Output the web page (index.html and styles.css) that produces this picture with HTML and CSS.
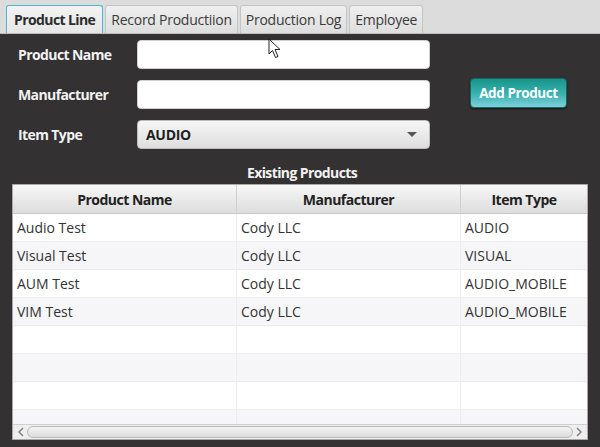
FILE: index.html
```html
<!DOCTYPE html>
<html>
<head>
<meta charset="utf-8">
<link rel="stylesheet" href="styles.css">
</head>
<body>
<div class="app">
  <div class="tabbar">
    <div class="tab active">Product Line</div>
    <div class="tab">Record Productiion</div>
    <div class="tab">Production Log</div>
    <div class="tab">Employee</div>
  </div>
  <div class="content">
    <div class="form">
      <div class="fields">
        <label class="lbl">Product Name</label>
        <div class="input"></div>
        <label class="lbl">Manufacturer</label>
        <div class="input"></div>
        <label class="lbl">Item Type</label>
        <div class="combo"><span>AUDIO</span><span class="caret"></span></div>
      </div>
      <div class="side">
        <button class="btn">Add Product</button>
      </div>
    </div>
    <div class="caption">Existing Products</div>
    <div class="table">
      <div class="thead">
        <div class="th c1">Product Name</div>
        <div class="th c2">Manufacturer</div>
        <div class="th c3">Item Type</div>
      </div>
      <div class="tbody">
        <div class="tr"><div class="td c1">Audio Test</div><div class="td c2">Cody LLC</div><div class="td c3">AUDIO</div></div>
        <div class="tr"><div class="td c1">Visual Test</div><div class="td c2">Cody LLC</div><div class="td c3">VISUAL</div></div>
        <div class="tr"><div class="td c1">AUM Test</div><div class="td c2">Cody LLC</div><div class="td c3">AUDIO_MOBILE</div></div>
        <div class="tr"><div class="td c1">VIM Test</div><div class="td c2">Cody LLC</div><div class="td c3">AUDIO_MOBILE</div></div>
        <div class="tr"><div class="td c1"></div><div class="td c2"></div><div class="td c3"></div></div>
        <div class="tr"><div class="td c1"></div><div class="td c2"></div><div class="td c3"></div></div>
        <div class="tr"><div class="td c1"></div><div class="td c2"></div><div class="td c3"></div></div>
        <div class="tr short"><div class="td c1"></div><div class="td c2"></div><div class="td c3"></div></div>
      </div>
      <div class="hscroll">
        <svg class="arrow" width="12" height="12" viewBox="0 0 12 12"><path d="M8 2 L4 6 L8 10" fill="none" stroke="#777" stroke-width="1.3"/></svg>
        <div class="track"></div>
        <svg class="arrow" width="12" height="12" viewBox="0 0 12 12"><path d="M4 2 L8 6 L4 10" fill="none" stroke="#777" stroke-width="1.3"/></svg>
      </div>
    </div>
  </div>
  <svg class="cursor" width="14" height="22" viewBox="0 0 14 22">
    <path d="M1 1 L1 16 L4.5 12.5 L7.5 19.5 L10 18.5 L7 11.5 L12 11.5 Z" fill="#fff" stroke="#222" stroke-width="1"/>
  </svg>
</div>
</body>
</html>
```
FILE: styles.css
```css
* { box-sizing: border-box; }
html, body { margin: 0; padding: 0; }
body {
  width: 600px;
  height: 447px;
  overflow: hidden;
  background: #333132;
  font-family: "Open Sans", "Noto Sans", sans-serif;
  font-size: 14px;
}
.app { position: relative; width: 600px; height: 447px; }
.tabbar {
  height: 34px;
  background: #dcdcdc;
  display: flex;
  align-items: flex-end;
  padding-left: 6px;
  gap: 2px;
  border-bottom: 1px solid #bdbdbd;
}
.tab {
  height: 28px;
  padding: 0 5px;
  line-height: 27px;
  color: #3a3a3a;
  background: linear-gradient(#efefef, #dedede);
  border: 1px solid #c4c4c4;
  border-bottom: none;
  border-radius: 3px 3px 0 0;
  font-size: 14px;
  letter-spacing: -0.25px;
}
.tab.active {
  font-weight: 700;
  color: #2c2c2c;
  background: linear-gradient(#f3f3f3, #e6e6e6);
  border: 1.5px solid #4db8d4;
  border-bottom: none;
  padding: 0 7px;
  letter-spacing: -0.6px;
}
.content {
  padding: 6px 12px 0 12px;
}
.form {
  display: flex;
  align-items: center;
}
.fields {
  display: grid;
  grid-template-columns: 125px 293px;
  grid-auto-rows: 29px;
  row-gap: 11px;
  align-items: center;
}
.lbl {
  color: #f2f2f2;
  font-weight: 700;
  font-size: 14px;
  padding-left: 6px;
  letter-spacing: -0.6px;
}
.input {
  height: 29px;
  background: #fff;
  border-radius: 4px;
  border: 1px solid #cfcfcf;
}
.combo {
  height: 29px;
  border-radius: 4px;
  background: linear-gradient(#f6f6f6, #dedede);
  border: 1px solid #bcbcbc;
  display: flex;
  align-items: center;
  justify-content: space-between;
  padding: 0 12px 0 8px;
  font-weight: 700;
  color: #1f1f1f;
  font-size: 14px;
  letter-spacing: -0.3px;
}
.caret {
  width: 0; height: 0;
  border-left: 5px solid transparent;
  border-right: 5px solid transparent;
  border-top: 5px solid #555;
}
.side {
  padding-left: 40px;
  align-self: center;
}
.btn {
  width: 97px;
  height: 30px;
  border: 1px solid #15685f;
  border-radius: 4px;
  background: linear-gradient(#16958a, #3bb2b0 55%, #7fd0dc);
  color: #fff;
  font-family: "Open Sans", "Noto Sans", sans-serif;
  font-weight: 700;
  font-size: 13.5px;
  padding: 0;
  letter-spacing: -0.4px;
  margin-top: -3px;
  box-shadow: 0 1px 2px rgba(0,0,0,0.6);
}
.caption {
  text-align: center;
  color: #f2f2f2;
  font-weight: 700;
  font-size: 14px;
  height: 23px;
  line-height: 23px;
  margin-top: 12px;
  padding-left: 4px;
  letter-spacing: -0.6px;
}
.table {
  width: 576px;
  height: 256px;
  background: #fff;
  border: 1px solid #a8a8a8;
  display: flex;
  flex-direction: column;
  overflow: hidden;
}
.thead {
  display: flex;
  height: 29px;
  flex: none;
  background: linear-gradient(#f7f7f7, #dddddd);
  border-bottom: 1px solid #c8c8c8;
}
.th {
  display: flex;
  align-items: center;
  justify-content: center;
  font-weight: 700;
  color: #222;
  font-size: 14px;
  border-right: 1px solid #cfcfcf;
  letter-spacing: -0.5px;
}
.c1 { width: 224px; }
.c2 { width: 224px; }
.c3 { flex: 1; border-right: none; }
.tbody { flex: 1; overflow: hidden; }
.tr {
  display: flex;
  height: 28px;
  border-bottom: 1px solid #ececec;
}
.tr:nth-child(even) { background: #f6f6f8; }
.tr.short { height: 16px; }
.td {
  display: flex;
  align-items: center;
  padding-left: 4px;
  color: #333;
  font-size: 14px;
  border-right: 1px solid #ececec;
}
.td.c3 { border-right: none; }
.hscroll {
  height: 15px;
  flex: none;
  display: flex;
  align-items: center;
  background: #eeeeee;
  border-top: 1px solid #d0d0d0;
  padding: 0 2px;
}
.arrow {
  flex: none;
}
.track {
  flex: 1;
  height: 12px;
  border-radius: 6px;
  border: 1px solid #b9b9b9;
  background: linear-gradient(#f4f4f4, #dcdcdc);
}
.cursor {
  position: absolute;
  left: 268px;
  top: 38px;
}
```
